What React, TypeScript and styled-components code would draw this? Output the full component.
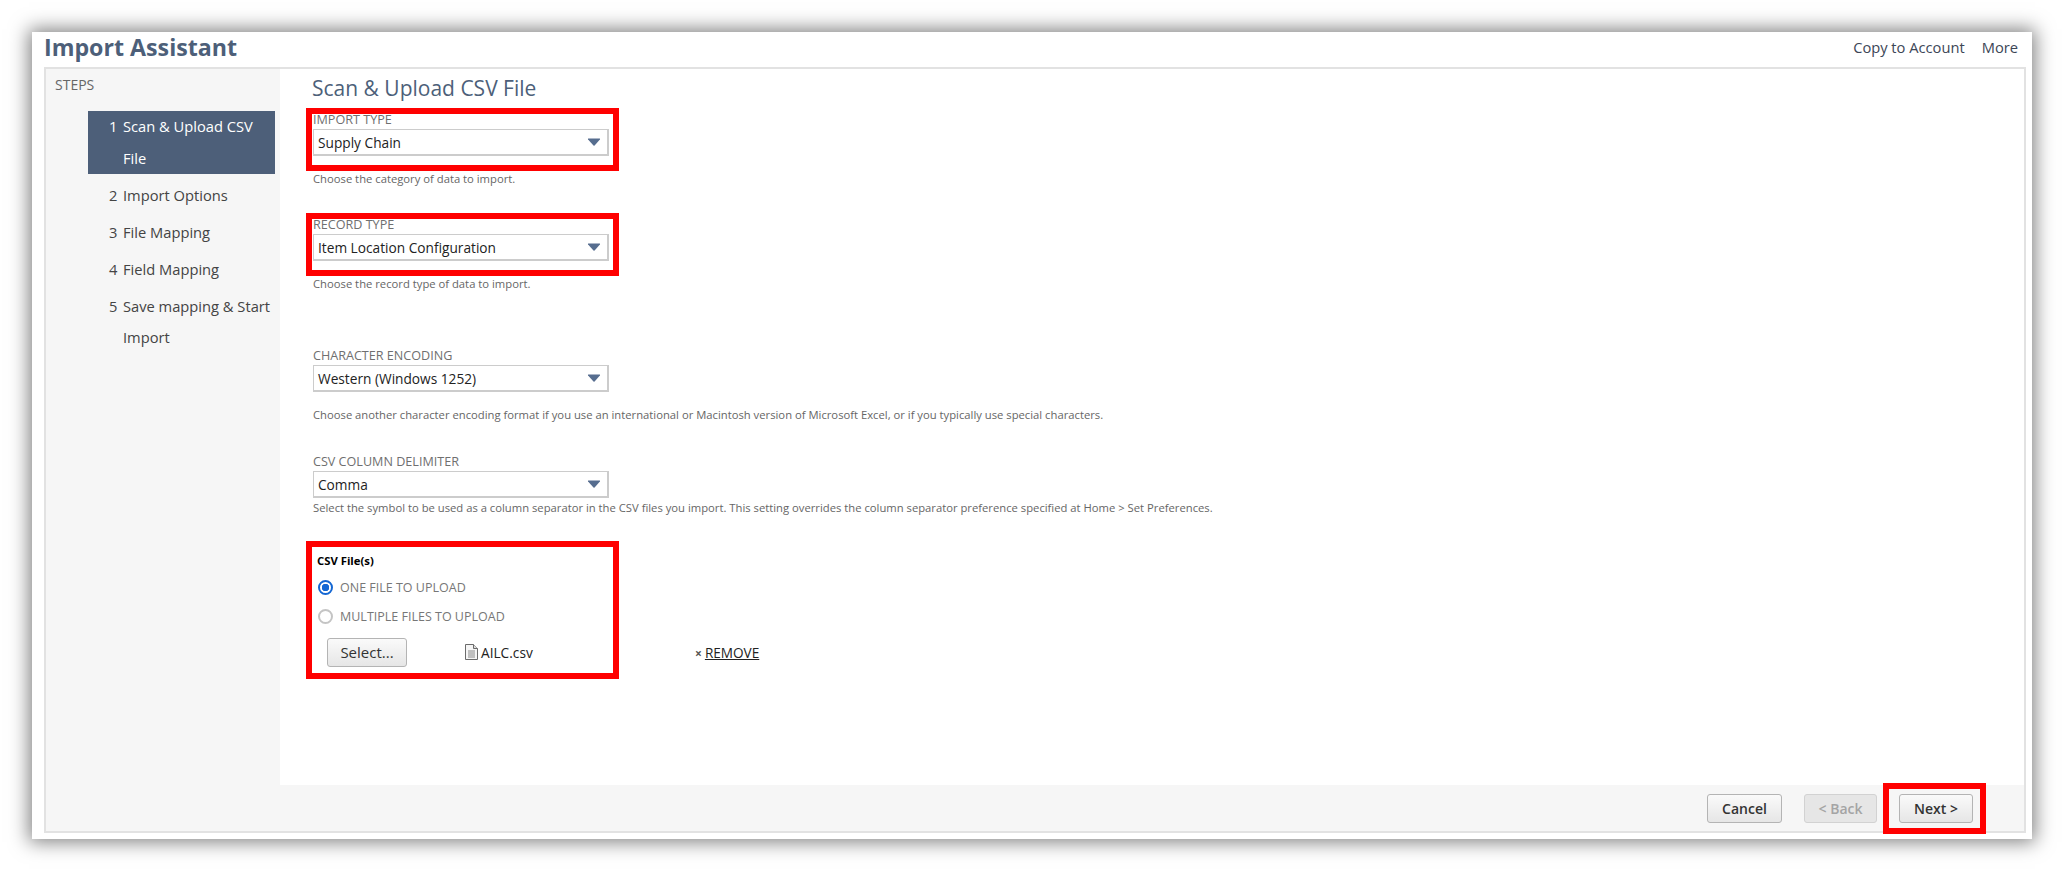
import styled, { createGlobalStyle } from 'styled-components'

const GlobalStyle = createGlobalStyle`
  html, body {
    margin: 0;
    padding: 0;
    background: #fff;
    font-family: "Open Sans", "Liberation Sans", sans-serif;
    overflow: hidden;
  }
`

const Page = styled.div`
  width: 2064px;
  height: 871px;
  padding: 32px;
  box-sizing: border-box;
`

const Window = styled.div`
  height: 807px;
  background: #fff;
  box-shadow: 0 0 18px 3px rgba(0, 0, 0, 0.5);
  padding: 0 6px 6px 12px;
  box-sizing: border-box;
  display: flex;
  flex-direction: column;
`

const TitleBar = styled.div`
  height: 35px;
  flex: none;
  box-sizing: border-box;
  padding: 0 8px 5px 0;
  display: flex;
  align-items: center;
  justify-content: space-between;
`

const Title = styled.h1`
  margin: 0;
  font-size: 23.2px;
  font-weight: 700;
  color: #4d5f79;
`

const TitleActions = styled.div`
  display: flex;
  gap: 17px;
  font-size: 14.7px;
  color: #3c4656;
`

const Frame = styled.div`
  flex: 1;
  min-height: 0;
  border: 2px solid #e2e2e2;
  display: flex;
  flex-direction: column;
`

const Body = styled.div`
  flex: 1;
  min-height: 0;
  display: grid;
  grid-template-columns: 234px 1fr;
`

const Sidebar = styled.aside`
  background: #f6f6f6;
  padding: 7px 5px 0 9px;
`

const StepsLabel = styled.div`
  font-size: 14px;
  line-height: 18px;
  color: #666;
  margin-bottom: 17px;
`

const StepList = styled.ol`
  list-style: none;
  margin: 0 0 0 33px;
  padding: 0;
`

const Step = styled.li<{ $active?: boolean }>`
  display: flex;
  padding: 0 2px 0 21px;
  margin-bottom: 5.5px;
  font-size: 14.7px;
  line-height: 31.5px;
  color: ${p => (p.$active ? '#fff' : '#444')};
  background: ${p => (p.$active ? '#4d5f79' : 'transparent')};
`

const StepNumber = styled.span`
  width: 14px;
  flex: none;
`

const Main = styled.main`
  padding: 6px 0 0 33px;
`

const Heading = styled.h2`
  margin: 0 0 10px -1px;
  font-size: 21px;
  font-weight: 400;
  line-height: 27px;
  color: #4d5f79;
`

const Field = styled.div<{ $gap?: number }>`
  margin-top: ${p => p.$gap ?? 0}px;
`

// red annotation drawn over the control, keeps the form in normal flow
const Highlight = styled.div`
  position: relative;
  width: 296px;

  &::after {
    content: '';
    position: absolute;
    inset: -4px -10px -15px -7px;
    border: 6px solid #f00;
    pointer-events: none;
  }
`

const Label = styled.div`
  font-size: 12.6px;
  line-height: 16px;
  height: 17px;
  color: #6f6f6f;
`

const SelectBox = styled.div`
  width: 296px;
  height: 27px;
  box-sizing: border-box;
  border: 1px solid #ccc;
  border-bottom-width: 2px;
  border-right-width: 2px;
  display: flex;
  align-items: center;
  justify-content: space-between;
  padding: 0 6px 0 4px;
  font-size: 13.7px;
  color: #222;
  background: #fff;
`

const Help = styled.div<{ $tight?: boolean }>`
  margin-top: ${p => (p.$tight ? 2 : 15)}px;
  font-size: 11.25px;
  line-height: 16px;
  color: #666;
`

const FileGroup = styled(Highlight)`
  margin-top: 37px;
  padding-left: 4px;
  box-sizing: border-box;

  &::after {
    inset: -12px -10px -12px -7px;
  }
`

const FileLabel = styled.div`
  font-size: 11.3px;
  font-weight: 700;
  line-height: 16px;
  color: #000;
  margin-bottom: 10px;
`

const RadioRow = styled.label`
  display: flex;
  align-items: center;
  gap: 7px;
  height: 16px;
  margin-bottom: 13px;
  font-size: 12.5px;
  color: #777;
`

const Radio = styled.span<{ $checked?: boolean }>`
  width: 15px;
  height: 15px;
  margin-left: 1px;
  box-sizing: border-box;
  border-radius: 50%;
  border: 2px solid ${p => (p.$checked ? '#1467d3' : '#c4c4c4')};
  background: ${p => (p.$checked ? 'radial-gradient(circle, #1467d3 0 3.5px, #fff 4px)' : '#fff')};
  flex: none;
`

const FileRow = styled.div`
  display: flex;
  align-items: center;
  height: 30px;
  margin-top: 5px;
  padding-left: 10px;
  width: 600px;
`

const Button = styled.button<{ $width: number; $disabled?: boolean }>`
  width: ${p => p.$width}px;
  height: 29px;
  padding: 0;
  flex: none;
  border: 1px solid ${p => (p.$disabled ? '#d2d2d2' : '#b4b4b4')};
  border-radius: 3px;
  background: ${p => (p.$disabled ? '#e6e6e6' : 'linear-gradient(#fafafa, #e6e6e6)')};
  color: ${p => (p.$disabled ? '#a4a4a4' : '#333')};
  font-family: inherit;
  font-size: 15px;
`

const FooterButton = styled(Button)`
  font-size: 14px;
  font-weight: 600;
`

const FileName = styled.span`
  display: flex;
  align-items: center;
  gap: 3px;
  margin-left: 58px;
  width: 230px;
  font-size: 13.7px;
  color: #222;
`

const Remove = styled.span`
  font-size: 13.6px;
  color: #222;

  & > u {
    margin-left: 3px;
  }
`

const RemoveMark = styled.span`
  font-size: 12px;
  font-weight: 700;
  color: #555;
`

const Footer = styled.footer`
  height: 46px;
  flex: none;
  background: #f6f6f6;
  display: flex;
  align-items: center;
  justify-content: flex-end;
  gap: 22px;
  padding: 0 51px 0 0;
`

const NextWrap = styled.div`
  position: relative;

  &::after {
    content: '';
    position: absolute;
    inset: -11px -13px -11px -16px;
    border: 6px solid #f00;
    pointer-events: none;
  }
`

function Arrow() {
  return (
    <svg width="14" height="8" viewBox="0 0 14 8">
      <path d="M1.500.6h11c.5 0 .7.5.4.9L7.600 7.400c-.3.3-.8.3-1.100 0L1.100 1.500C.8 1.100 1 .600 1.500.6z" fill="#566d8f" />
    </svg>
  )
}

function FileIcon() {
  return (
    <svg width="13" height="16" viewBox="0 0 13 16">
      <path d="M.5.5h8l4 4v11H.500z" fill="#f5f5f5" stroke="#6b6b6b" />
      <path d="M8.500.5v4h4" fill="#ddd" stroke="#6b6b6b" />
      <path d="M3 7h7M3 9h7M3 11h7M3 13h7" stroke="#8a8a8a" />
    </svg>
  )
}

function Select({ value }: { value: string }) {
  return (
    <SelectBox>
      <span>{value}</span>
      <Arrow />
    </SelectBox>
  )
}

const steps = [
  'Scan & Upload CSV File',
  'Import Options',
  'File Mapping',
  'Field Mapping',
  'Save mapping & Start Import',
]

export default function App() {
  return (
    <Page>
      <GlobalStyle />
      <Window>
        <TitleBar>
          <Title>Import Assistant</Title>
          <TitleActions>
            <span>Copy to Account</span>
            <span>More</span>
          </TitleActions>
        </TitleBar>
        <Frame>
          <Body>
            <Sidebar>
              <StepsLabel>STEPS</StepsLabel>
              <StepList>
                {steps.map((step, i) => (
                  <Step key={step} $active={i === 0}>
                    <StepNumber>{i + 1}</StepNumber>
                    <span>{step}</span>
                  </Step>
                ))}
              </StepList>
            </Sidebar>
            <Main>
              <Heading>Scan &amp; Upload CSV File</Heading>
              <Field>
                <Highlight>
                  <Label>IMPORT TYPE</Label>
                  <Select value="Supply Chain" />
                </Highlight>
                <Help>Choose the category of data to import.</Help>
              </Field>
              <Field $gap={30}>
                <Highlight>
                  <Label>RECORD TYPE</Label>
                  <Select value="Item Location Configuration" />
                </Highlight>
                <Help>Choose the record type of data to import.</Help>
              </Field>
              <Field $gap={56}>
                <Label>CHARACTER ENCODING</Label>
                <Select value="Western (Windows 1252)" />
                <Help>
                  Choose another character encoding format if you use an international or Macintosh version of Microsoft Excel, or if you typically use special characters.
                </Help>
              </Field>
              <Field $gap={31}>
                <Label>CSV COLUMN DELIMITER</Label>
                <Select value="Comma" />
                <Help $tight>
                  Select the symbol to be used as a column separator in the CSV files you import. This setting overrides the column separator preference specified at Home &gt; Set Preferences.
                </Help>
              </Field>
              <FileGroup>
                <FileLabel>CSV File(s)</FileLabel>
                <RadioRow>
                  <Radio $checked />
                  ONE FILE TO UPLOAD
                </RadioRow>
                <RadioRow>
                  <Radio />
                  MULTIPLE FILES TO UPLOAD
                </RadioRow>
                <FileRow>
                  <Button $width={80}>Select...</Button>
                  <FileName>
                    <FileIcon />
                    AILC.csv
                  </FileName>
                  <Remove>
                    <RemoveMark>×</RemoveMark>
                    <u>REMOVE</u>
                  </Remove>
                </FileRow>
              </FileGroup>
            </Main>
          </Body>
          <Footer>
            <FooterButton $width={75}>Cancel</FooterButton>
            <FooterButton $width={73} $disabled>&lt; Back</FooterButton>
            <NextWrap>
              <FooterButton $width={74}>Next &gt;</FooterButton>
            </NextWrap>
          </Footer>
        </Frame>
      </Window>
    </Page>
  )
}
